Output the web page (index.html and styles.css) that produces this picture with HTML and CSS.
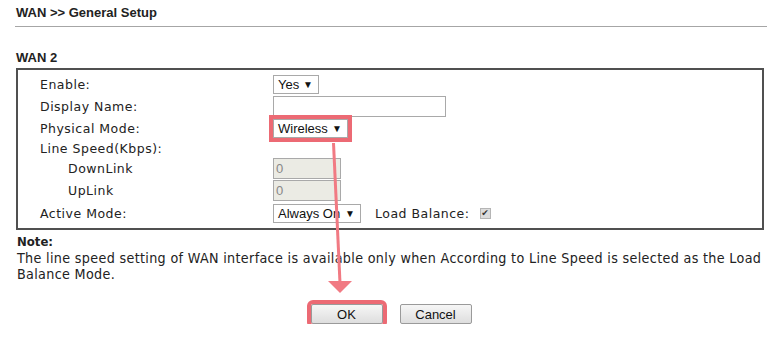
FILE: index.html
```html
<!DOCTYPE html>
<html>
    <head>
        <title>WAN General Setup</title>
        <link rel="stylesheet" href="styles.css">
    </head>
    <body>
        <div class="page">
            <h1 class="title">WAN &gt;&gt; General Setup</h1>
            <h2 class="section">WAN 2</h2>

            <div class="box">
                <div class="row">
                    <span class="label">Enable:</span>
                    <span class="select sel-yes">Yes<span class="caret">&#9660;</span></span>
                </div>
                <div class="row">
                    <span class="label">Display Name:</span>
                    <span class="input name-input"></span>
                </div>
                <div class="row">
                    <span class="label">Physical Mode:</span>
                    <span class="select sel-mode marked">Wireless<span class="caret">&#9660;</span></span>
                </div>
                <div class="row row-short">
                    <span class="label">Line Speed(Kbps):</span>
                </div>
                <div class="row">
                    <span class="label sub">DownLink</span>
                    <span class="input speed-input">0</span>
                </div>
                <div class="row">
                    <span class="label sub">UpLink</span>
                    <span class="input speed-input">0</span>
                </div>
                <div class="row row-tall">
                    <span class="label">Active Mode:</span>
                    <span class="inline">
                        <span class="select sel-active">Always On<span class="caret">&#9660;</span></span>
                        <span class="label lb-label">Load Balance:</span>
                        <span class="check">&#10004;</span>
                    </span>
                </div>
            </div>

            <div class="note">
                <b>Note:</b><br>
                The line speed setting of WAN interface is available only when According to Line Speed is selected as the Load Balance Mode.
            </div>

            <div class="actions">
                <button class="btn marked">OK</button>
                <button class="btn">Cancel</button>
            </div>
        </div>

        <!-- callout arrow drawn over the form -->
        <svg class="pointer" width="776" height="340" viewBox="0 0 776 340">
            <line x1="333.5" y1="143" x2="340" y2="283" stroke="#f17a83" stroke-width="3"/>
            <polygon points="328,281 352,281 340,293" fill="#f17a83"/>
        </svg>
    </body>
</html>
```

FILE: styles.css
```css
body{
    margin:0;
    background:#fff;
    color:#222;
}
.page{
    width:752px;
    padding-left:15px;
}
.title{
    margin:0;
    padding:5px 0 6px 1px;
    line-height:15px;
    font:bold 13px "Liberation Sans", Arial, sans-serif;
    border-bottom:1px solid #a6a6a6;
}
.section{
    margin:23px 0 3px 1px;
    line-height:15px;
    font:bold 13px "Liberation Sans", Arial, sans-serif;
}
.box{
    box-sizing:border-box;
    margin-left:1px;
    width:748px;
    border:2px solid #505050;
    padding:3px 0 3px 22px;
}
.row{
    display:grid;
    grid-template-columns:233px 1fr;
    align-items:center;
    height:22px;
}
.row-short{
    height:18px;
}
.row-tall{
    height:24px;
}
.label{
    font:12.5px "DejaVu Sans", Verdana, sans-serif;
    letter-spacing:0.5px;
    color:#222;
}
.sub{
    padding-left:28px;
}
.select, .input{
    box-sizing:border-box;
    display:inline-flex;
    align-items:center;
    height:19px;
    border:1px solid #a9a9a9;
    background:#fff;
    font:13px "Liberation Sans", Arial, sans-serif;
    color:#111;
    padding-left:4px;
}
.select{
    justify-content:space-between;
    padding-right:5px;
}
.caret{
    font-size:10px;
    color:#111;
}
.sel-yes{ width:46px; }
.sel-mode{ width:75px; }
.sel-active{ width:88px; }
.name-input{ width:173px; height:21px; }
.speed-input{
    width:68px;
    height:21px;
    background:#ebebe4;
    color:#888;
    padding-left:2px;
}
.marked{
    outline:4px solid #ec6a74;
}
.inline{
    display:flex;
    align-items:center;
}
.lb-label{
    margin-left:14px;
}
.check{
    box-sizing:border-box;
    width:11px;
    height:11px;
    margin-left:10px;
    border:1px solid #b5b5b5;
    background:#dcdcdc;
    color:#333;
    font:9px "DejaVu Sans", sans-serif;
    line-height:9px;
    text-align:center;
}
.note{
    width:752px;
    margin:3px 0 0 2px;
    font:14.2px "DejaVu Sans Condensed", Tahoma, sans-serif;
    letter-spacing:0.33px;
    line-height:16px;
    color:#222;
}
.note b{
    font-size:13px;
    letter-spacing:0;
}
.actions{
    display:flex;
    justify-content:center;
    gap:17px;
    margin-top:22px;
}
.btn{
    width:72px;
    height:20px;
    border:1px solid #9a9a9a;
    border-radius:2px;
    background:linear-gradient(#f6f6f6, #dedede);
    font:13px "Liberation Sans", Arial, sans-serif;
    color:#111;
    padding:0;
}
.pointer{
    position:absolute;
    left:0;
    top:0;
    pointer-events:none;
}
```
